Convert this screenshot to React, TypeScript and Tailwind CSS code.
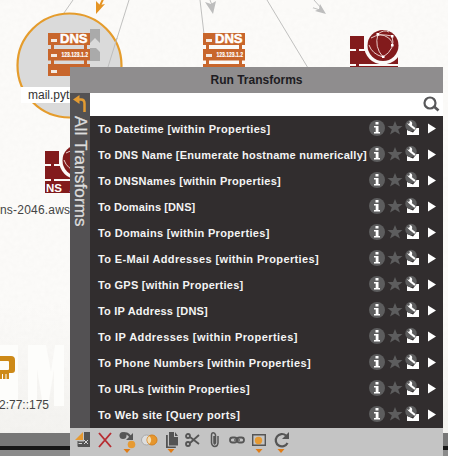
import React from "react";

const transforms = [
  { name: "To Datetime [within Properties]", tracking: "tracking-[0.35px]" },
  { name: "To DNS Name [Enumerate hostname numerically]", tracking: "tracking-[0.24px]" },
  { name: "To DNSNames [within Properties]", tracking: "tracking-[0.27px]" },
  { name: "To Domains [DNS]", tracking: "tracking-[0.1px]" },
  { name: "To Domains [within Properties]", tracking: "tracking-[0.33px]" },
  { name: "To E-Mail Addresses [within Properties]", tracking: "tracking-[0.37px]" },
  { name: "To GPS [within Properties]", tracking: "tracking-[0.27px]" },
  { name: "To IP Address [DNS]", tracking: "tracking-[0.2px]" },
  { name: "To IP Addresses [within Properties]", tracking: "tracking-[0.44px]" },
  { name: "To Phone Numbers [within Properties]", tracking: "tracking-[0.37px]" },
  { name: "To URLs [within Properties]", tracking: "tracking-[0.29px]" },
  { name: "To Web site [Query ports]", tracking: "tracking-[0.35px]" },
];

function DnsServer({ x, y }: { x: number; y: number }) {
  return (
    <g transform={`translate(${x} ${y})`}>
      <path fill="#c8662c" d="M0 0h42v12H0zM0 16h42v11.500H0zM0 31h42v12H0zM3 12h3v4H3zM36 12h3v4h-3zM3 27h3v4H3zM36 27h3v4h-3z" />
      <path fill="#f4e9e0" d="M3 6h6v3H3zM3 21h6v3H3zM3 37h6v3H3z" />
      <text x="12" y="10" fontSize="12" fontWeight="700" fill="#fff" stroke="#fff" strokeWidth=".5" textLength="27.5" lengthAdjust="spacingAndGlyphs">DNS</text>
      <text x="13.5" y="24" fontSize="7" fontWeight="700" fill="#fff" stroke="#fff" strokeWidth=".2" textLength="26.5" lengthAdjust="spacingAndGlyphs">123.123.1.2</text>
    </g>
  );
}

function NameServer({ x, y }: { x: number; y: number }) {
  return (
    <g transform={`translate(${x} ${y})`}>
      <path fill="#821b1c" d="M0 0h14v13H0zM0 15h48v13H0zM0 30h48v12H0zM6 13h3v3H6zM6 28h3v3H6z" />
      <path fill="#fbfaf8" d="M14-7h35v22H14z" />
      <circle cx="33" cy="9.5" r="19" fill="#fbfaf8" />
      <circle cx="33" cy="9.5" r="15.5" fill="#821b1c" />
      <g fill="none" stroke="#e8cdca" strokeWidth="1">
        <path d="M21 2q8-5 21-2M28-2q-4 13 5 23M28-2q14 2 15 12M42 0q4 13-9 21M19 9q3 9 14 12M28-2q6-5 11-2" />
      </g>
      <path fill="#fff" d="M26.500-3h2.500v2.500h-2.500zM41-1h2.500v2.500H41zM41 8h2.500v2.500H41zM32 19.500h2.500V22H32z" />
      <text x="1" y="40.500" fontSize="11.500" fontWeight="700" fill="#fff">NS</text>
      <text x="24.500" y="40.500" fontSize="11.500" fontWeight="700" fill="#fff">A</text>
    </g>
  );
}

function Graph() {
  return (
    <svg className="absolute inset-0" width="448" height="433" viewBox="0 0 448 433" fontFamily="Liberation Sans, sans-serif">
      <defs>
        <filter id="paper" x="0" y="0" width="100%" height="100%">
          <feTurbulence type="fractalNoise" baseFrequency=".22" numOctaves="3" seed="5" />
          <feColorMatrix values="0 0 0 0 .5 0 0 0 0 .5 0 0 0 0 .48 .07 0 0 0 -.015" />
        </filter>
        <linearGradient id="fade" x2="0" y2="1">
          <stop stopColor="#fcfbf9" />
          <stop offset=".7" stopColor="#fcfbf9" />
          <stop offset="1" stopColor="#f4f3f0" />
        </linearGradient>
      </defs>
      <rect width="448" height="433" fill="url(#fade)" />
      <rect width="448" height="433" filter="url(#paper)" />
      <path fill="#fdfdfb" d="M0 345h18v61H0zM28 345h18l5 27 4-27h9v61H54v-37l-6 37h-5l-6-37v37h-9z" />
      <path stroke="#c0c0bf" fill="none" d="M73 0L57 23M129 0L108 67M200 0l4 34M210 0l2 5M267 0l41 68M289 0l34 11M314 0l8 9" strokeWidth="1" strokeDasharray="none" />
      <path fill="#fbfaf8" d="M286-1h27v9h-27z" />
      <path fill="#bdbdbd" d="M205 2l6 2 5-3-3 13zM326 14l-11-3 4-2 1-5z" />
      <circle cx="69.500" cy="65.500" r="52" fill="#dadada" stroke="#e59c2c" strokeWidth="2.200" />
      <path stroke="#bebebe" fill="none" d="M117 38L108 67" />
      <path d="M104-3L99 8" stroke="#e59424" strokeWidth="2" />
      <path fill="#e59424" d="M96 1l4 4 5-1-9 10z" />
      <DnsServer x={48} y={33} />
      <path fill="#aaa" d="M90 29h10v14l-5-5-5 5zM90 48h6l4 4v9H90z" />
      <DnsServer x={203} y={33} />
      <NameServer x={350} y={36} />
      <NameServer x={45} y={151} />
      <path fill="#cd8917" fillRule="evenodd" d="M0 356h11q4 0 4 4v10q0 3-3 3H9v6H0v-6zM0 361h8q1 0 1 1v7q0 1-1 1H0z" />
      <path stroke="#fff" d="M2.500 374v5M6 374v5" />
    </svg>
  );
}

function TransformIcons() {
  return (
    <svg width="74" height="26" viewBox="0 0 74 26" className="shrink-0">
      <circle cx="8" cy="12" r="8" fill="#5d5d5e" />
      <path fill="#fff" d="M6.500 6h3v2.500h-3zM5 10h4.500v6H11v1.500H5V16h1.700v-4.500H5z" />
      <path fill="#5d5d5e" d="M26 5l2 5h5.500l-4.300 3.500 1.800 5-5-3-5 3 1.800-5-4.300-3.500H24z" />
      <path fill="#fff" d="M38 14l6 2.500 3.500-4.500H50v7H38z" />
      <circle cx="42" cy="9.500" r="5.700" fill="#5d5d5e" />
      <path fill="none" stroke="#fff" strokeWidth="2.200" d="M41 9l5 4" />
      <path fill="#fff" d="M38 7l2 1 1-2-1-1q4 0 3 4-2 3-5-2z" />
      <path fill="#fff" d="M59 7.500l8 5-8 5z" />
    </svg>
  );
}

const down = "M-3.5 21h7l-3.500 4z";

function Toolbar() {
  return (
    <svg width="373" height="28" viewBox="0 0 373 28" fill="none">
      <path fill="#535353" d="M14 4h6v15H8v-5.500h6z" />
      <path stroke="#535353" d="M8 13v5.500" />
      <path fill="#e69a32" d="M13 4v8H5z" />
      <path stroke="#d4d4d4" d="M8.500 15.500H12M14 12l4 4m0-4l-4 4" />
      <path stroke="#b72d32" strokeWidth="1.900" d="M29 5l12 14M41 5L29 19" />
      <circle cx="53" cy="7.500" r="3.500" fill="#555" />
      <path stroke="#555" strokeWidth="2.200" d="M54 5.500q5-.5 7 5" />
      <path fill="#555" d="M63 5v7h-7z" />
      <circle cx="61.500" cy="16.500" r="3.800" fill="#e69a32" />
      <circle cx="76.500" cy="12" r="5" fill="#ddd" stroke="#aaa" />
      <circle cx="82" cy="12" r="5" fill="#e6962c" stroke="#d5811c" />
      <path fill="#f3dcb0" d="M79.200 8a5 5 0 0 1 0 8a5 5 0 0 1 0-8" />
      <path fill="#535353" d="M99 4h5v5h4v8.500H99zM105 4l3 4h-3zM96 7h1.800v11.500h8V20H96z" />
      <g stroke="#555" strokeWidth="1.800">
        <circle cx="118" cy="8" r="2" /><circle cx="118" cy="16" r="2" />
        <path d="M120 9l9 7M120 15l9-8" />
        <path strokeWidth="1.500" d="M144 8v7q.5 2 1.500 0V7q-.5-2.200-2.200-2.200T141.500 7v8q.5 3.500 3.300 3.500T148 15V8" />
        <rect x="160" y="9.500" width="7" height="5" rx="2.500" /><rect x="167" y="9.500" width="7" height="5" rx="2.500" />
        <path strokeWidth="1.400" d="M164 12h6" />
      </g>
      <path stroke="#555" strokeWidth="1.400" d="M182.700 6.700h12.600v10.600h-12.600z" />
      <circle cx="188.500" cy="12.500" r="3.700" fill="#e69a32" />
      <path stroke="#555" strokeWidth="2.200" d="M216 7.500a6.200 6.200 0 1 0 1.500 7.500" />
      <path fill="#555" d="M219 4v7h-7z" />
      <g fill="#df7c16">
        <path transform="translate(57)" d={down} /><path transform="translate(101)" d={down} />
        <path transform="translate(189)" d={down} /><path transform="translate(211)" d={down} />
      </g>
    </svg>
  );
}

export default function App() {
  return (
    <main className="relative h-[460px] w-[457px] overflow-hidden bg-white font-['Liberation_Sans',Arial,sans-serif]">
      <Graph />
      <div className="absolute top-[433px] h-[23px] w-[448px] border-b-[6px] border-[#8b8b8b] bg-[#777] pt-[13px]">
        <div className="h-1 bg-[#171717]" />
      </div>
      <span className="absolute top-[87px] left-[21px] h-4 w-[60px] bg-white pl-[7px] text-[12px] leading-4 text-[#333]">mail.python</span>
      <span className="absolute top-[202px] left-0 text-[12px] leading-4 tracking-[0.2px] text-[#444]">ns-2046.awsdns</span>
      <span className="absolute top-[397px] left-[-1px] text-[12px] leading-4 text-[#444]">2:77::175</span>

      <section className="absolute top-[67px] left-[70px] flex h-[389px] w-[373px] flex-col bg-[#312d2e]">
        <header className="h-[26px] bg-[#8f8d8e] text-center text-[12px] leading-[27px] font-bold text-[#1d1c22]">Run Transforms</header>
        <div className="flex h-[335px]">
          <aside className="flex w-5 shrink-0 flex-col items-center bg-[#535153]">
            <svg className="shrink-0" width="20" height="23" viewBox="0 0 20 23">
              <path fill="none" stroke="#e39b32" strokeWidth="2.500" d="M8 6.500h3q3.500 0 3.500 4V19" />
              <path fill="#e39b32" d="M3 6.500L9.500 2v9z" />
            </svg>
            <span className="text-[17px] leading-5 tracking-[0.15px] whitespace-nowrap text-[#ddd] [-webkit-text-stroke:0.3px_#ddd] [writing-mode:vertical-rl]">All Transforms</span>
          </aside>
          <div className="flex w-[353px] flex-col">
            <div className="flex h-[23px] shrink-0 justify-end bg-white">
              <svg width="22" height="23" viewBox="0 0 22 23" fill="none" stroke="#58585a">
                <circle cx="9" cy="10" r="5.500" strokeWidth="2.200" /><path strokeWidth="2.700" d="M13 13.500l4.500 4" />
              </svg>
            </div>
            <ul>
              {transforms.map(({ name, tracking }) => (
                <li key={name} className="flex h-[26px] justify-between pl-2">
                  <span className={`w-[271px] text-[11px] leading-[26px] font-bold whitespace-nowrap text-[#f4f4f4] ${tracking}`}>{name}</span>
                  <TransformIcons />
                </li>
              ))}
            </ul>
          </div>
        </div>
        <footer className="h-7 bg-[#c4c4c4]"><Toolbar /></footer>
      </section>
    </main>
  );
}
